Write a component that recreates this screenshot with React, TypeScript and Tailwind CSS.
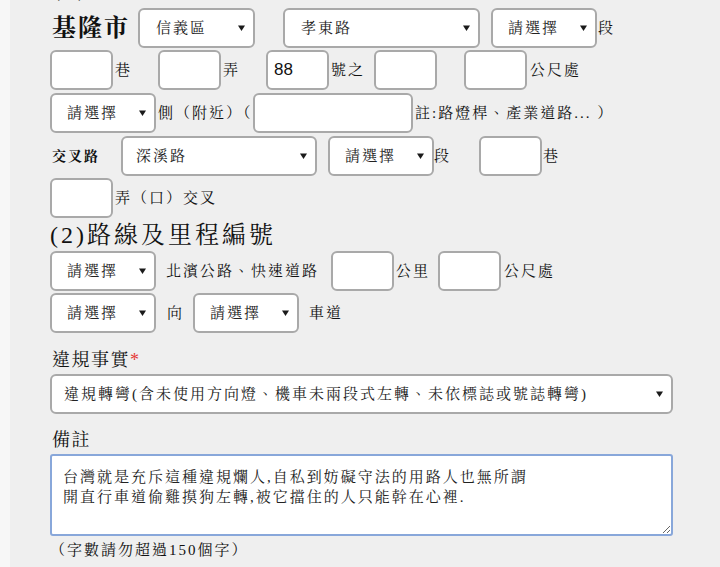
import type { ReactNode } from "react";

const serif = "[font-family:'Liberation_Serif','Noto_Serif_CJK_TC','Noto_Sans_CJK_TC',serif]";

function Arrow() {
  return (
    <svg
      className="pointer-events-none absolute right-[10px] top-1/2 -translate-y-1/2"
      width="7"
      height="6"
      viewBox="0 0 7 6"
    >
      <path d="M0 0.5 L7 0.5 L3.5 6 Z" fill="#1a1a1a" />
    </svg>
  );
}

function Select({
  value,
  width,
  pad = "pl-[16px]",
  className = "",
}: {
  value: string;
  width: string;
  pad?: string;
  className?: string;
}) {
  return (
    <div className={`relative h-[40px] shrink-0 ${width} ${className}`}>
      <select
        defaultValue={value}
        className={`h-full w-full appearance-none rounded-[6px] border-2 border-[#a9a9a9] bg-white ${pad} pr-[22px] text-[15px] tracking-[2px] text-[#222] outline-none ${serif}`}
      >
        <option value={value}>{value}</option>
      </select>
      <Arrow />
    </div>
  );
}

function Box({ value = "", width = "w-[63px]", className = "" }: { value?: string; width?: string; className?: string }) {
  return (
    <input
      defaultValue={value}
      className={`h-[40px] shrink-0 rounded-[6px] border-2 border-[#a9a9a9] bg-white pl-[6px] text-[17px] text-[#111] outline-none [font-family:'Liberation_Sans',Arial,sans-serif] ${width} ${className}`}
    />
  );
}

function Txt({ children, className = "" }: { children: ReactNode; className?: string }) {
  return <span className={`shrink-0 whitespace-nowrap text-[15px] tracking-[2px] ${className}`}>{children}</span>;
}

function Row({ children, className = "" }: { children: ReactNode; className?: string }) {
  return <div className={`flex h-[40px] items-center ${className}`}>{children}</div>;
}

export default function App() {
  return (
    <div className={`flex min-h-screen overflow-hidden bg-[#efefef] text-[#111] ${serif}`}>
      <div className="w-[10px] shrink-0 bg-[#f7f7f7]" />
      <div className="flex-1 pl-[40px]">
        {/* 上一段標題，捲出畫面只剩底部 */}
        <div className="-mt-[24px] h-[32px] pl-[2px] text-[24px] leading-[24px] tracking-[3px]">(1)違規地點</div>

        <div className="flex flex-col gap-[2px]">
          <Row>
            <span className="w-[88px] shrink-0 pl-[2px] text-[24px] font-bold tracking-[2px]">基隆市</span>
            <Select value="信義區" width="w-[117px]" pad="pl-[16px]" />
            <Select value="孝東路" width="w-[197px]" pad="pl-[16px]" className="ml-[28px]" />
            <Select value="請選擇" width="w-[106px]" pad="pl-[15px]" className="ml-[11px]" />
            <Txt className="ml-[1px]">段</Txt>
          </Row>

          <Row>
            <Box />
            <Txt className="w-[45px] pl-[2px]">巷</Txt>
            <Box />
            <Txt className="w-[45px] pl-[2px]">弄</Txt>
            <Box value="88" />
            <Txt className="w-[45px] pl-[2px]">號之</Txt>
            <Box />
            <Box className="ml-[27px]" />
            <Txt className="ml-[3px]">公尺處</Txt>
          </Row>

          <Row className="mt-[1px]">
            <Select value="請選擇" width="w-[106px]" pad="pl-[15px]" />
            <Txt className="w-[97px] pl-[2px] tracking-[1px]">側（附近）（</Txt>
            <Box width="w-[160px]" />
            <Txt className="ml-[2px]">註:路燈桿、產業道路... ）</Txt>
          </Row>

          <Row className="mt-[1px]">
            <span className="w-[71px] shrink-0 pl-[2px] text-[14px] font-bold tracking-[2px]">交叉路</span>
            <Select value="深溪路" width="w-[196px]" pad="pl-[13px]" />
            <Select value="請選擇" width="w-[106px]" pad="pl-[15px]" className="ml-[11px]" />
            <Txt className="w-[45px]">段</Txt>
            <Box />
            <Txt className="ml-[1px]">巷</Txt>
          </Row>

          <Row>
            <Box />
            <Txt className="pl-[2px]">弄（口）交叉</Txt>
          </Row>
        </div>

        <div className="mt-[1px] h-[32px] text-[24px] leading-[32px] tracking-[3px]">(2)路線及里程編號</div>

        <div className="flex flex-col gap-[2px]">
          <Row>
            <Select value="請選擇" width="w-[106px]" pad="pl-[15px]" />
            <Txt className="w-[175px] pl-[10px]">北濱公路、快速道路</Txt>
            <Box />
            <Txt className="w-[44px] pl-[2px]">公里</Txt>
            <Box />
            <Txt className="ml-[3px]">公尺處</Txt>
          </Row>
          <Row>
            <Select value="請選擇" width="w-[106px]" pad="pl-[15px]" />
            <Txt className="w-[37px] pl-[11px]">向</Txt>
            <Select value="請選擇" width="w-[106px]" pad="pl-[15px]" />
            <Txt className="ml-[10px]">車道</Txt>
          </Row>
        </div>

        <div className="mt-[13px] h-[28px] pl-[2px] text-[18px] leading-[28px] tracking-[1.5px]">
          違規事實<span className="text-[#e53935]">*</span>
        </div>
        <Select
          value="違規轉彎(含未使用方向燈、機車未兩段式左轉、未依標誌或號誌轉彎)"
          width="w-[623px]"
          pad="pl-[12px]"
        />

        <div className="mt-[12px] h-[28px] pl-[2px] text-[18px] leading-[28px] tracking-[1.5px]">備註</div>
        <textarea
          defaultValue={"台灣就是充斥這種違規爛人,自私到妨礙守法的用路人也無所謂\n開直行車道偷雞摸狗左轉,被它擋住的人只能幹在心裡."}
          className={`block h-[82px] w-[623px] rounded-[3px] border-2 border-[#88a7da] bg-white px-[11px] pt-[11px] text-[15px] leading-[20px] tracking-[2px] text-[#222] outline-none ${serif}`}
        />
        <div className="mt-[2px] h-[24px] text-[15px] leading-[24px] tracking-[2px]">（字數請勿超過150個字）</div>
      </div>
    </div>
  );
}
